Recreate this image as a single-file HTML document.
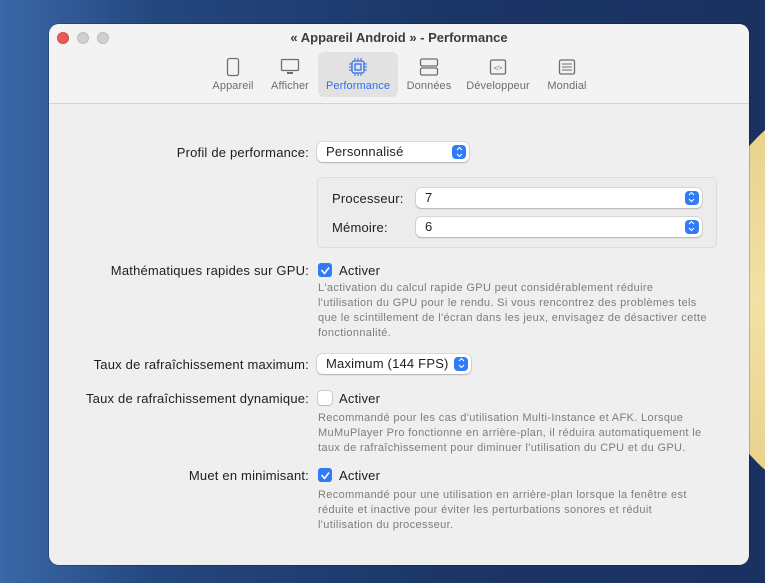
<!DOCTYPE html>
<html><head><meta charset="utf-8"><style>
*{margin:0;padding:0;box-sizing:border-box}
body{width:765px;height:583px;overflow:hidden;position:relative;font-family:"Liberation Sans",sans-serif;
background:linear-gradient(90deg,#3a68a8 0%,#24477f 20%,#1b3566 60%,#1a3262 100%)}
.glow{position:absolute;left:690px;top:70px;width:460px;height:460px;border-radius:50%;background:radial-gradient(circle at 20% 50%,#f3e3a8 0%,#e8cf88 45%,#c9b07a 75%,#5a6ea0 100%)}
.win{position:absolute;left:49px;top:24px;width:700px;height:541px;background:#efefef;border-radius:10px;overflow:hidden;box-shadow:0 0 0 0.5px rgba(0,0,0,.4)}
.top{position:absolute;left:0;top:0;width:700px;height:80px;background:#f3f3f3;border-bottom:1px solid #d4d4d4}
.dot{position:absolute;top:8px;width:12px;height:12px;border-radius:50%;background:#d0d0d0;border:0.5px solid #bdbdbd}
.title{position:absolute;left:0;width:700px;top:6px;text-align:center;font-size:13px;font-weight:bold;color:#3c3c3c}
.tab{position:absolute;top:56px;font-size:11px;color:#6e6e6e;text-align:center;transform:translateX(-50%);white-space:nowrap;letter-spacing:0.1px}
.ico{position:absolute;top:33px;transform:translateX(-50%)}
.sel{position:absolute;left:269px;top:28px;width:80px;height:45px;background:#e2e2e2;border-radius:6px}
.t{position:absolute;font-size:13px;color:#1e1e1e;white-space:nowrap;letter-spacing:0.2px}
.r{text-align:right;width:300px}
.d{position:absolute;font-size:11px;color:#7d7d7d;line-height:15px;white-space:nowrap;letter-spacing:0.35px}
.pop{position:absolute;height:20px;background:#fff;border-radius:5px;box-shadow:0 0 0 0.5px rgba(0,0,0,.18),0 1px 1.5px rgba(0,0,0,.18);font-size:13px;color:#1e1e1e;padding:2px 0 0 9px;letter-spacing:0.2px}
.pop .a{position:absolute;right:3px;top:3px;width:14px;height:14px;border-radius:4px;background:#2f7cf6}
.cb{position:absolute;width:14px;height:14px;border-radius:3px;background:#2f7cf6}
.cb.off{background:#fff;box-shadow:0 0 0 0.5px rgba(0,0,0,.3),0 1px 1px rgba(0,0,0,.1)}
.grp{position:absolute;left:268px;top:153px;width:400px;height:71px;border:1px solid #dcdcdc;border-radius:5px;background:#ececec}
</style></head><body>
<div class="glow"></div>
<div class="win">
<div class="top">
<div class="dot" style="left:8px;background:#ee5a52;border-color:#d44a42"></div>
<div class="dot" style="left:28px"></div>
<div class="dot" style="left:48px"></div>
<div class="title">« Appareil Android » - Performance</div>
<div class="sel"></div>
<svg class="ico" style="left:184px" width="14" height="20" viewBox="0 0 14 20"><rect x="1.5" y="1.5" width="11" height="17" rx="2" fill="none" stroke="#6e6e6e" stroke-width="1.3"/></svg>
<svg class="ico" style="left:241px" width="20" height="20" viewBox="0 0 20 20"><rect x="1.5" y="2.5" width="17" height="11" rx="1" fill="none" stroke="#6e6e6e" stroke-width="1.3"/><path d="M7 16h6" stroke="#6e6e6e" stroke-width="2"/></svg>
<svg class="ico" style="left:309px" width="18" height="20" viewBox="0 0 18 20"><rect x="3" y="4" width="12" height="12" rx="2" fill="none" stroke="#2f6ef0" stroke-width="1.3"/><rect x="6" y="7" width="6" height="6" fill="none" stroke="#2f6ef0" stroke-width="1.3"/><path d="M6 1v3M9 1v3M12 1v3M6 16v3M9 16v3M12 16v3M0 7h3M0 10h3M0 13h3M15 7h3M15 10h3M15 13h3" stroke="#2f6ef0" stroke-width="1"/></svg>
<svg class="ico" style="left:380px" width="20" height="20" viewBox="0 0 20 20"><rect x="1.5" y="2" width="17" height="7" rx="1.5" fill="none" stroke="#6e6e6e" stroke-width="1.3"/><rect x="1.5" y="11" width="17" height="7" rx="1.5" fill="none" stroke="#6e6e6e" stroke-width="1.3"/></svg>
<svg class="ico" style="left:449px" width="18" height="20" viewBox="0 0 18 20"><rect x="1.5" y="3" width="15" height="14" rx="1.5" fill="none" stroke="#6e6e6e" stroke-width="1.3"/><text x="9" y="13" font-size="6" text-anchor="middle" fill="#6e6e6e" font-family="Liberation Sans">&lt;/&gt;</text></svg>
<svg class="ico" style="left:518px" width="18" height="20" viewBox="0 0 18 20"><rect x="1.5" y="3" width="15" height="14" rx="1.5" fill="none" stroke="#6e6e6e" stroke-width="1.3"/><path d="M4 7h10M4 10h10M4 13h10" stroke="#6e6e6e" stroke-width="1"/></svg>
<div class="tab" style="left:184px">Appareil</div>
<div class="tab" style="left:241px">Afficher</div>
<div class="tab" style="left:309px;color:#2f6ef0">Performance</div>
<div class="tab" style="left:380px">Données</div>
<div class="tab" style="left:449px">Développeur</div>
<div class="tab" style="left:518px">Mondial</div>
</div>

<div class="t r" style="left:-40px;top:121px">Profil de performance:</div>
<div class="pop" style="left:268px;top:118px;width:152px">Personnalisé<div class="a"></div></div>

<div class="grp"></div>
<div class="t" style="left:283px;top:167px">Processeur:</div>
<div class="pop" style="left:367px;top:164px;width:286px">7<div class="a"></div></div>
<div class="t" style="left:283px;top:196px">Mémoire:</div>
<div class="pop" style="left:367px;top:193px;width:286px">6<div class="a"></div></div>

<div class="t r" style="left:-40px;top:239px">Mathématiques rapides sur GPU:</div>
<div class="cb" style="left:269px;top:239px"></div>
<div class="t" style="left:290px;top:239px">Activer</div>
<div class="d" style="left:269px;top:257px">L'activation du calcul rapide GPU peut considérablement réduire<br>l'utilisation du GPU pour le rendu. Si vous rencontrez des problèmes tels<br>que le scintillement de l'écran dans les jeux, envisagez de désactiver cette<br>fonctionnalité.</div>

<div class="t r" style="left:-40px;top:333px">Taux de rafraîchissement maximum:</div>
<div class="pop" style="left:268px;top:330px;width:154px">Maximum (144 FPS)<div class="a"></div></div>

<div class="t r" style="left:-40px;top:367px">Taux de rafraîchissement dynamique:</div>
<div class="cb off" style="left:269px;top:367px"></div>
<div class="t" style="left:290px;top:367px">Activer</div>
<div class="d" style="left:269px;top:387px">Recommandé pour les cas d'utilisation Multi-Instance et AFK. Lorsque<br>MuMuPlayer Pro fonctionne en arrière-plan, il réduira automatiquement le<br>taux de rafraîchissement pour diminuer l'utilisation du CPU et du GPU.</div>

<div class="t r" style="left:-40px;top:444px">Muet en minimisant:</div>
<div class="cb" style="left:269px;top:444px"></div>
<div class="t" style="left:290px;top:444px">Activer</div>
<div class="d" style="left:269px;top:464px">Recommandé pour une utilisation en arrière-plan lorsque la fenêtre est<br>réduite et inactive pour éviter les perturbations sonores et réduit<br>l'utilisation du processeur.</div>
</div>
<svg style="position:absolute;left:0;top:0" width="765" height="583">
<g fill="none" stroke="#fff" stroke-width="1.6">
<path d="M321.5 270l3 3.5 4.5-6"/>
<path d="M321.5 475l3 3.5 4.5-6"/>
</g>
<g fill="none" stroke="#fff" stroke-width="1.1">
<path d="M457 150l2.5-2.5 2.5 2.5M457 154l2.5 2.5 2.5-2.5"/>
<path d="M689 195l2.5-2.5 2.5 2.5M689 199l2.5 2.5 2.5-2.5"/>
<path d="M689 224l2.5-2.5 2.5 2.5M689 228l2.5 2.5 2.5-2.5"/>
<path d="M459 361l2.5-2.5 2.5 2.5M459 365l2.5 2.5 2.5-2.5"/>
</g>
</svg>
</body></html>
